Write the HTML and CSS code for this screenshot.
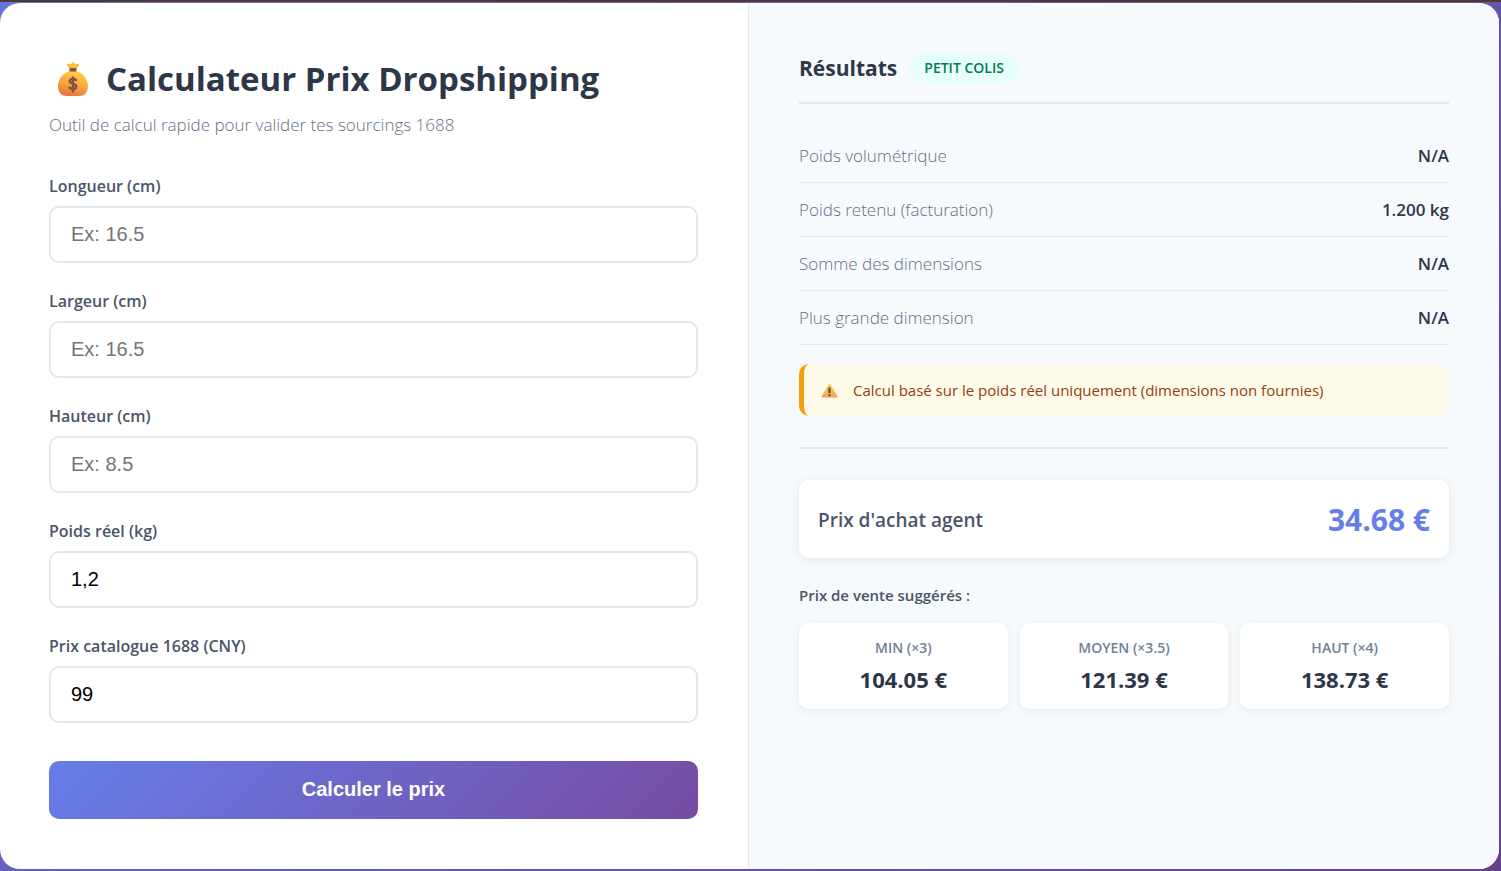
FILE: index.html
```html
<!DOCTYPE html>
<html lang="fr">
<head>
<meta charset="utf-8">
<title>Calculateur Prix Dropshipping</title>
<link rel="stylesheet" href="styles.css">
</head>
<body>
<main class="card">
  <section class="panel form-panel">
    <h1 class="title">
      <svg class="bag" viewBox="0 0 34 36" aria-hidden="true">
        <defs>
          <linearGradient id="bag-fill" x1="0.7" y1="0" x2="0.35" y2="1">
            <stop offset="0" stop-color="#ffd449"/><stop offset="0.55" stop-color="#f9a53c"/><stop offset="1" stop-color="#e4743b"/>
          </linearGradient>
        </defs>
        <path d="M13 7.500 11 4Q10.500 2.600 12.300 2.800L14.800 3.300 16.300 1.400Q17 0.600 17.700 1.400L19.200 3.300 21.700 2.800Q23.500 2.600 23 4L21 7.500Z" fill="#ffbd3f"/>
        <path d="M13.500 10H20.500C27 12 32 18 32 25 32 32 28 35 23 35H11C6 35 2 32 2 25 2 18 7 12 13.500 10Z" fill="url(#bag-fill)"/>
        <rect x="13.500" y="7" width="7" height="3.500" rx="1.200" fill="#81523f"/>
        <path d="M20.300 20C19.800 17.500 13.700 17.200 13.700 20.300 13.700 23.300 20.300 22 20.300 25.700 20.300 29 13.700 28.600 13.200 25.800M17 15.500V31.500" fill="none" stroke="#81523f" stroke-width="2.400"/>
      </svg>
      <span>Calculateur Prix Dropshipping</span>
    </h1>
    <p class="subtitle">Outil de calcul rapide pour valider tes sourcings 1688</p>
    <form class="form">
      <div class="field"><label for="longueur">Longueur (cm)</label><input id="longueur" type="text" placeholder="Ex: 16.5"></div>
      <div class="field"><label for="largeur">Largeur (cm)</label><input id="largeur" type="text" placeholder="Ex: 16.5"></div>
      <div class="field"><label for="hauteur">Hauteur (cm)</label><input id="hauteur" type="text" placeholder="Ex: 8.5"></div>
      <div class="field"><label for="poids">Poids réel (kg)</label><input id="poids" type="text" value="1,2"></div>
      <div class="field"><label for="prix">Prix catalogue 1688 (CNY)</label><input id="prix" type="text" value="99"></div>
      <button class="submit" type="button">Calculer le prix</button>
    </form>
  </section>
  <section class="panel result-panel">
    <header class="result-header">
      <h2>Résultats</h2>
      <span class="badge">PETIT COLIS</span>
    </header>
    <dl class="rows">
      <div class="row"><dt>Poids volumétrique</dt><dd>N/A</dd></div>
      <div class="row"><dt>Poids retenu (facturation)</dt><dd>1.200 kg</dd></div>
      <div class="row"><dt>Somme des dimensions</dt><dd>N/A</dd></div>
      <div class="row"><dt>Plus grande dimension</dt><dd>N/A</dd></div>
    </dl>
    <p class="warning">
      <svg class="warning-icon" viewBox="0 0 17 15" aria-hidden="true">
        <defs>
          <linearGradient id="warn-fill" x1="0" y1="0" x2="0" y2="1">
            <stop offset="0" stop-color="#ffd052"/><stop offset="1" stop-color="#fba04c"/>
          </linearGradient>
        </defs>
        <path d="M7.700 1.200Q8.500 0 9.300 1.200L16.500 13.500Q17 14.500 16 14.500H1Q0 14.500 0.500 13.500Z" fill="url(#warn-fill)"/>
        <path d="M8.500 4.500V10M8.500 11.200V13.200" stroke="#4b4543" stroke-width="2"/>
      </svg>
      <span>Calcul basé sur le poids réel uniquement (dimensions non fournies)</span>
    </p>
    <div class="pricing">
      <div class="agent"><span class="agent-label">Prix d'achat agent</span><strong class="agent-price">34.68 €</strong></div>
      <h3 class="suggest-title">Prix de vente suggérés :</h3>
      <div class="suggestions">
        <div class="suggestion"><span class="tier">MIN (×3)</span><strong class="price">104.05 €</strong></div>
        <div class="suggestion"><span class="tier">MOYEN (×3.5)</span><strong class="price">121.39 €</strong></div>
        <div class="suggestion"><span class="tier">HAUT (×4)</span><strong class="price">138.73 €</strong></div>
      </div>
    </div>
  </section>
</main>
</body>
</html>
```
FILE: styles.css
```css
* { box-sizing: border-box; margin: 0; padding: 0; }

body {
  min-height: 100vh;
  display: flex;
  padding: 1px 2px 2px 0;
  border-top: 2px solid #50382e;
  background: linear-gradient(135deg, #6474de 0%, #64418e 100%);
  font-family: "Open Sans", "Noto Sans", sans-serif;
  color: #2d3748;
}

.card {
  flex: 1;
  display: grid;
  grid-template-columns: 749fr 750fr;
  overflow: hidden;
  border-radius: 20px;
  background: #fff;
}

.panel { padding: 49px 50px; }
.form-panel { padding-left: 49px; border-right: 1px solid #e2e8f0; }
.result-panel { background: #f7fafc; }

.title {
  display: flex;
  align-items: center;
  gap: 16px;
  padding-left: 7px;
  font-size: 33px;
  line-height: 54px;
  font-weight: 700;
  white-space: nowrap;
}
.bag { width: 34px; height: 36px; flex: none; }

.subtitle {
  margin: 6px 0 36px;
  color: #5f6f87;
  font-size: 17px;
  line-height: 26px;
  font-weight: 300;
}

.form { display: flex; flex-direction: column; gap: 26px; }
.field { display: flex; flex-direction: column; gap: 7px; }
.field label { color: #4a5568; font-size: 16px; line-height: 25px; font-weight: 600; }
.field input {
  width: 100%;
  height: 57px;
  padding: 0 20px;
  border: 2px solid #e2e8f0;
  border-radius: 10px;
  background: #fff;
  color: #000;
  font-family: "Liberation Sans", Arial, sans-serif;
  font-size: 20px;
}
.field input::placeholder { color: #757575; }

.submit {
  height: 58px;
  margin-top: 12px;
  padding-bottom: 2px;
  border: 0;
  border-radius: 10px;
  background: linear-gradient(135deg, #667eea 0%, #764ba2 100%);
  color: #fff;
  font-family: "Liberation Sans", Arial, sans-serif;
  font-size: 20px;
  font-weight: 700;
}

.result-header {
  display: flex;
  align-items: center;
  gap: 12px;
  padding-bottom: 18px;
  border-bottom: 2px solid #e2e8f0;
}
.result-header h2 { font-size: 21px; line-height: 32px; font-weight: 700; }
.badge {
  padding: 0 15px;
  border-radius: 20px;
  background: #e6fffa;
  color: #047857;
  font-size: 14px;
  line-height: 30px;
  font-weight: 600;
}

.rows { margin-top: 25px; }
.row {
  display: flex;
  justify-content: space-between;
  padding: 14px 0;
  border-bottom: 1px solid #e2e8f0;
  font-size: 17px;
  line-height: 25px;
}
.row dt { color: #5f6f87; font-weight: 300; }
.row dd { font-weight: 600; }

.warning {
  display: flex;
  align-items: center;
  gap: 15px;
  margin-top: 19px;
  padding: 14px 17px;
  border-left: 5px solid #f59e0b;
  border-radius: 10px;
  background: #fffbeb;
  color: #92400e;
  font-size: 15px;
  line-height: 24px;
}
.warning-icon { width: 17px; height: 15px; flex: none; }

.pricing { margin-top: 31px; padding-top: 31px; border-top: 2px solid #e2e8f0; }
.agent {
  display: flex;
  justify-content: space-between;
  align-items: center;
  padding: 20px 19px 18px;
  border-radius: 10px;
  background: #fff;
  box-shadow: 0 2px 10px rgba(0, 0, 0, 0.08);
}
.agent-label { color: #4a5568; font-size: 19px; font-weight: 600; }
.agent-price { color: #667eea; font-size: 30px; line-height: 40px; font-weight: 700; }

.suggest-title {
  margin: 25px 0 15px;
  color: #4a5568;
  font-size: 15px;
  line-height: 25px;
  font-weight: 600;
}
.suggestions { display: grid; grid-template-columns: repeat(3, 1fr); gap: 12px; }
.suggestion {
  display: flex;
  flex-direction: column;
  align-items: center;
  gap: 5px;
  padding: 15px 15px 14px;
  border-radius: 10px;
  background: #fff;
  box-shadow: 0 2px 8px rgba(0, 0, 0, 0.06);
}
.tier { color: #718096; font-size: 14px; line-height: 20px; font-weight: 600; }
.price { font-size: 22px; line-height: 32px; font-weight: 700; }
```
